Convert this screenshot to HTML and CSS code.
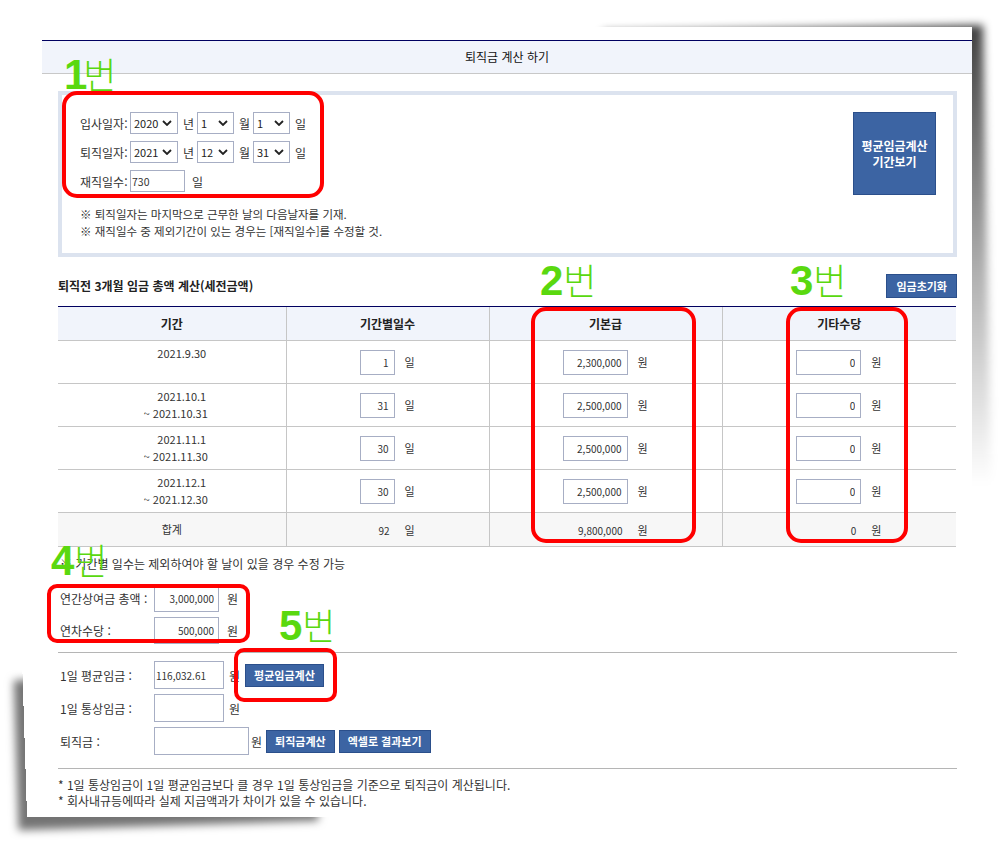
FILE: index.html
```html
<!DOCTYPE html>
<html lang="ko">

<head>
  <meta charset="UTF-8" />
  <meta name="viewport" content="width=device-width, initial-scale=1.0" />
  <title>퇴직금 계산 하기</title>
  <link rel="stylesheet" href="styles.css">
</head>

<body>
  <div class="paper">
    <div class="title-bar">퇴직금 계산 하기</div>

    <div class="content">
      <div class="date-box">
        <div class="date-fields">
          <div class="field-row">
            <span class="lbl">입사일자:</span>
            <span class="sel"><select class="w48"><option>2020</option></select><svg viewBox="0 0 10 6"><polyline points="1,1 5,5 9,1" /></svg></span>
            <span class="unit">년</span>
            <span class="sel"><select class="w37"><option>1</option></select><svg viewBox="0 0 10 6"><polyline points="1,1 5,5 9,1" /></svg></span>
            <span class="unit">월</span>
            <span class="sel"><select class="w37"><option>1</option></select><svg viewBox="0 0 10 6"><polyline points="1,1 5,5 9,1" /></svg></span>
            <span class="unit">일</span>
          </div>
          <div class="field-row">
            <span class="lbl">퇴직일자:</span>
            <span class="sel"><select class="w48"><option>2021</option></select><svg viewBox="0 0 10 6"><polyline points="1,1 5,5 9,1" /></svg></span>
            <span class="unit">년</span>
            <span class="sel"><select class="w37"><option>12</option></select><svg viewBox="0 0 10 6"><polyline points="1,1 5,5 9,1" /></svg></span>
            <span class="unit">월</span>
            <span class="sel"><select class="w37"><option>31</option></select><svg viewBox="0 0 10 6"><polyline points="1,1 5,5 9,1" /></svg></span>
            <span class="unit">일</span>
          </div>
          <div class="field-row">
            <span class="lbl">재직일수:</span>
            <input type="text" class="days-input" value="730" />
            <span class="unit wide">일</span>
          </div>
          <div class="box-notes">
            <p>※ 퇴직일자는 마지막으로 근무한 날의 다음날자를 기재.</p>
            <p>※ 재직일수 중 제외기간이 있는 경우는 [재직일수]를 수정할 것.</p>
          </div>
        </div>
        <button class="btn btn-big">평균임금계산<br>기간보기</button>
      </div>

      <div class="section-head">
        <h2>퇴직전 3개월 임금 총액 계산(세전금액)</h2>
        <button class="btn">임금초기화</button>
      </div>

      <table class="wage-table">
        <colgroup>
          <col style="width: 228px">
          <col style="width: 203px">
          <col style="width: 233px">
          <col style="width: 234px">
        </colgroup>
        <thead>
          <tr>
            <th>기간</th>
            <th>기간별일수</th>
            <th>기본급</th>
            <th>기타수당</th>
          </tr>
        </thead>
        <tbody>
          <tr>
            <td class="period"><span class="d1">2021.9.30</span><br>&nbsp;</td>
            <td><input class="cell-input short" value="1" /><span class="u">일</span></td>
            <td><input class="cell-input" value="2,300,000" /><span class="u">원</span></td>
            <td><input class="cell-input" value="0" /><span class="u">원</span></td>
          </tr>
          <tr>
            <td class="period"><span class="d1">2021.10.1</span><br>~ 2021.10.31</td>
            <td><input class="cell-input short" value="31" /><span class="u">일</span></td>
            <td><input class="cell-input" value="2,500,000" /><span class="u">원</span></td>
            <td><input class="cell-input" value="0" /><span class="u">원</span></td>
          </tr>
          <tr>
            <td class="period"><span class="d1">2021.11.1</span><br>~ 2021.11.30</td>
            <td><input class="cell-input short" value="30" /><span class="u">일</span></td>
            <td><input class="cell-input" value="2,500,000" /><span class="u">원</span></td>
            <td><input class="cell-input" value="0" /><span class="u">원</span></td>
          </tr>
          <tr>
            <td class="period"><span class="d1">2021.12.1</span><br>~ 2021.12.30</td>
            <td><input class="cell-input short" value="30" /><span class="u">일</span></td>
            <td><input class="cell-input" value="2,500,000" /><span class="u">원</span></td>
            <td><input class="cell-input" value="0" /><span class="u">원</span></td>
          </tr>
          <tr class="total">
            <td>합계</td>
            <td><span class="sum short">92</span><span class="u">일</span></td>
            <td><span class="sum">9,800,000</span><span class="u">원</span></td>
            <td><span class="sum">0</span><span class="u">원</span></td>
          </tr>
        </tbody>
      </table>

      <p class="tip">※ 기간별 일수는 제외하여야 할 날이 있을 경우 수정 가능</p>

      <div class="extra">
        <div class="form-row">
          <label>연간상여금 총액 :</label>
          <input class="extra-input" value="3,000,000" />
          <span class="u2">원</span>
        </div>
        <div class="form-row">
          <label>연차수당 :</label>
          <input class="extra-input" value="500,000" />
          <span class="u2">원</span>
        </div>
      </div>

      <div class="result">
        <div class="form-row">
          <label>1일 평균임금 :</label>
          <input class="result-input" value="116,032.61" />
          <span class="u3">원</span>
          <button class="btn btn-sm">평균임금계산</button>
        </div>
        <div class="form-row">
          <label>1일 통상임금 :</label>
          <input class="result-input" value="" />
          <span class="u3">원</span>
        </div>
        <div class="form-row">
          <label>퇴직금 :</label>
          <input class="result-input long" value="" />
          <span class="u3 tight">원</span>
          <button class="btn btn-sm">퇴직금계산</button>
          <button class="btn btn-sm">엑셀로 결과보기</button>
        </div>
      </div>

      <div class="footnotes">
        <p>* 1일 통상임금이 1일 평균임금보다 클 경우 1일 통상임금을 기준으로 퇴직금이 계산됩니다.</p>
        <p>* 회사내규등에따라 실제 지급액과가 차이가 있을 수 있습니다.</p>
      </div>
    </div>

    <!-- annotations -->
    <div class="redbox r1"></div>
    <div class="redbox r2"></div>
    <div class="redbox r3"></div>
    <div class="redbox r4"></div>
    <div class="redbox r5"></div>

    <div class="mark m1"><b>1</b><span>번</span></div>
    <div class="mark m2"><b>2</b><span>번</span></div>
    <div class="mark m3"><b>3</b><span>번</span></div>
    <div class="mark m4"><b>4</b><span>번</span></div>
    <div class="mark m5"><b>5</b><span>번</span></div>
  </div>
</body>

</html>
```

FILE: styles.css
```css
body {
  margin: 0;
  padding: 27px 0 0 27px;
  height: 845px;
  box-sizing: border-box;
  background-color: #fff;
  font-family: "Noto Sans CJK KR", sans-serif;
  font-size: 11px;
  color: #333;
}

p {
  margin: 0;
}

.paper {
  position: relative;
  width: 945px;
  height: 790px;
  padding: 13px 0 0 15px;
  box-sizing: border-box;
  background-color: #fff;
}

/* curled paper shadows */
.paper::before {
  content: "";
  position: absolute;
  z-index: -1;
  top: -2px;
  right: -11px;
  width: 380px;
  height: 460px;
  background: linear-gradient(to bottom, rgba(0, 0, 0, 0.75), rgba(0, 0, 0, 0.3) 55%, rgba(0, 0, 0, 0));
  filter: blur(4px);
  transform: rotate(-1deg);
  transform-origin: top right;
}

.paper::after {
  content: "";
  position: absolute;
  z-index: -1;
  left: 0;
  bottom: 0;
  width: 300px;
  height: 150px;
  box-shadow: -9px 13px 8px rgba(0, 0, 0, 0.55);
  transform: rotate(-1.8deg);
  transform-origin: bottom left;
}

.title-bar {
  height: 32px;
  line-height: 32px;
  border-top: 1px solid #000060;
  border-bottom: 1px solid #c8c8c8;
  background-color: #f1f4fb;
  text-align: center;
  font-size: 12px;
  color: #111;
}

.content {
  margin: 17px 15px 0 16px;
}

/* date box */
.date-box {
  display: flex;
  justify-content: space-between;
  align-items: flex-start;
  padding: 17px 17px 13px 18px;
  border: 4px solid #dce3ef;
}

.field-row {
  display: flex;
  align-items: center;
  height: 22px;
  margin-bottom: 7px;
  font-size: 12px;
}

.field-row .lbl {
  width: 50px;
}

.unit {
  margin: 0 3px 0 5px;
  width: 11px;
}

.unit.wide {
  margin-left: 7px;
}

.sel {
  position: relative;
  display: inline-block;
  height: 22px;
}

.sel select {
  appearance: none;
  -webkit-appearance: none;
  height: 22px;
  padding: 0 0 0 3px;
  border: 1px solid #a7aec4;
  border-radius: 0;
  background-color: #fff;
  font-family: "Noto Sans CJK KR", sans-serif;
  font-size: 11px;
  color: #222;
  box-sizing: border-box;
}

.sel svg {
  position: absolute;
  right: 6px;
  top: 8px;
  width: 10px;
  height: 6px;
  fill: none;
  stroke: #222;
  stroke-width: 1.8;
}

.w48 {
  width: 48px;
}

.w37 {
  width: 37px;
}

.days-input {
  width: 55px;
  height: 22px;
  padding: 0 1px;
  border: 1px solid #a7aec4;
  box-sizing: border-box;
  font-family: "Noto Sans CJK KR", sans-serif;
  font-size: 10.5px;
  color: #333;
}

.box-notes {
  margin-top: 14px;
  line-height: 17px;
  font-size: 11.5px;
}

/* buttons */
.btn {
  height: 24px;
  padding: 0 9px;
  border: 1px solid #2b4f8b;
  background-color: #3c64a3;
  color: #fff;
  font-family: "Noto Sans CJK KR", sans-serif;
  font-size: 11px;
  font-weight: bold;
  cursor: pointer;
}

.btn-big {
  width: 83px;
  height: 83px;
  padding: 0;
  font-size: 12px;
  line-height: 16px;
}

.btn-sm {
  height: 23px;
  padding: 0 8px;
}

.section-head {
  display: flex;
  justify-content: space-between;
  align-items: center;
  margin-top: 17px;
}

.section-head h2 {
  margin: 0 0 2px;
  font-size: 12px;
  font-weight: bold;
  color: #222;
}

/* table */
.wage-table {
  width: 898px;
  margin-top: 8px;
  border-collapse: collapse;
  table-layout: fixed;
  text-align: center;
}

.wage-table th {
  height: 33px;
  padding: 0;
  border-top: 1px solid #000060;
  border-bottom: 1px solid #c6c6c6;
  border-left: 1px solid #c6c6c6;
  background-color: #f1f4fb;
  font-size: 12px;
  font-weight: bold;
  color: #222;
}

.wage-table td {
  height: 42px;
  padding: 0;
  border-bottom: 1px solid #c6c6c6;
  border-left: 1px solid #c6c6c6;
  line-height: 17px;
}

.wage-table th:first-child,
.wage-table td:first-child {
  border-left: none;
}

.wage-table td.period {
  padding-left: 8px;
}

.period .d1 {
  padding-left: 12px;
}

.wage-table tr.total td {
  height: 33px;
  border-top: 1px solid #000060;
  background-color: #f7f7f7;
}

.cell-input {
  width: 65px;
  height: 25px;
  padding: 0 5px;
  border: 1px solid #a7aec4;
  box-sizing: border-box;
  text-align: right;
  font-family: "Noto Sans CJK KR", sans-serif;
  font-size: 10px;
  color: #333;
  vertical-align: middle;
}

.cell-input.short {
  width: 35px;
}

.u {
  display: inline-block;
  margin-left: 9px;
  width: 12px;
  vertical-align: middle;
}

.sum {
  display: inline-block;
  width: 65px;
  padding-right: 5px;
  box-sizing: border-box;
  text-align: right;
  vertical-align: middle;
  font-size: 10px;
}

.sum.short {
  width: 35px;
}

.tip {
  margin: 8px 0 0 2px;
  line-height: 17px;
  font-size: 12px;
}

/* lower form */
.form-row {
  display: flex;
  align-items: center;
  padding-left: 2px;
  font-size: 12px;
}

.form-row label {
  width: 94px;
}

.form-row input {
  font-family: "Noto Sans CJK KR", sans-serif;
  font-size: 10px;
  color: #333;
  border: 1px solid #a7aec4;
  box-sizing: border-box;
}

.extra {
  margin-top: 13px;
  display: flex;
  flex-direction: column;
  gap: 5px;
}

.extra-input {
  width: 65px;
  height: 27px;
  padding: 0 4px;
  text-align: right;
}

.u2 {
  margin-left: 8px;
}

.result {
  margin-top: 8px;
  padding-top: 8px;
  border-top: 1px solid #b5b5b5;
  display: flex;
  flex-direction: column;
  gap: 5px;
}

.result-input {
  width: 70px;
  height: 28px;
  padding: 0 1px;
}

.result-input.long {
  width: 95px;
}

.u3 {
  margin: 0 5px;
}

.u3.tight {
  margin: 0 4px 0 2px;
}

.result .btn + .btn {
  margin-left: 4px;
}

.footnotes {
  margin-top: 13px;
  padding-top: 8px;
  border-top: 1px solid #b5b5b5;
  line-height: 16px;
  font-size: 12px;
}

/* annotations */
.redbox {
  position: absolute;
  border: 4px solid #ff0000;
  border-radius: 15px;
  box-sizing: border-box;
}

.r1 { left: 35px; top: 64px; width: 262px; height: 107px; }
.r2 { left: 504px; top: 280px; width: 165px; height: 236px; }
.r3 { left: 759px; top: 280px; width: 122px; height: 236px; }
.r4 { left: 20px; top: 557px; width: 203px; height: 59px; border-radius: 10px; }
.r5 { left: 207px; top: 621px; width: 103px; height: 54px; border-radius: 10px; }

.mark {
  position: absolute;
  display: flex;
  align-items: baseline;
  line-height: 42px;
  color: #5ad80f;
}

.mark b {
  font-family: "Liberation Sans", sans-serif;
  font-size: 42px;
  font-weight: 900;
}

.mark span {
  font-family: "Noto Sans CJK KR", sans-serif;
  font-size: 36px;
  font-weight: 300;
}

.m1 { left: 37px; top: 25px; }
.m1 span { margin-left: -4px; }
.m2 { left: 513px; top: 231px; }
.m3 { left: 763px; top: 231px; }
.m4 { left: 24px; top: 511px; }
.m5 { left: 252px; top: 576px; }
```
